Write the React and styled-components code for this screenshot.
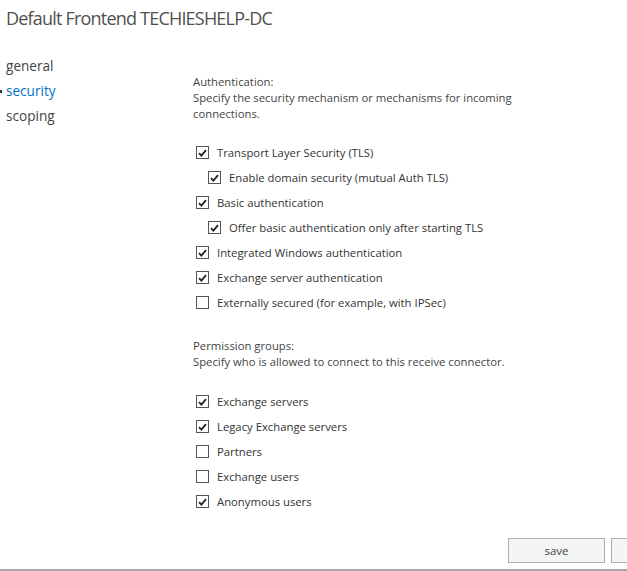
import React from 'react'
import styled, { createGlobalStyle } from 'styled-components'

const GlobalStyle = createGlobalStyle`
  html, body {
    margin: 0;
    padding: 0;
    background: #ffffff;
  }
  body {
    font-family: "Open Sans", "Noto Sans", "Liberation Sans", sans-serif;
    color: #333333;
  }
`

const Page = styled.div`
  width: 627px;
  height: 571px;
  display: flex;
  flex-direction: column;
  overflow: hidden;
  box-sizing: border-box;
`

const Title = styled.h1`
  margin: 0;
  padding: 6px 0 0 6px;
  height: 44px;
  box-sizing: border-box;
  font-size: 18px;
  letter-spacing: -0.8px;
  font-weight: 400;
  color: #505050;
  white-space: nowrap;
`

const Body = styled.div`
  flex: 1;
  display: grid;
  grid-template-columns: 193px 1fr;
`

const Nav = styled.nav`
  display: flex;
  flex-direction: column;
  padding-top: 9px;
`

const NavItem = styled.div`
  position: relative;
  height: 25px;
  line-height: 25px;
  padding-left: 6px;
  font-size: 13.6px;
  color: ${props => (props.active ? '#0072c6' : '#444444')};

  &::before {
    content: '';
    display: ${props => (props.active ? 'block' : 'none')};
    position: absolute;
    left: -2px;
    top: 12px;
    width: 4px;
    height: 3px;
    background: #333333;
  }
`

const Content = styled.div`
  padding-top: 30px;
  font-size: 11.3px;
  display: flex;
  flex-direction: column;
`

const Section = styled.section`
  margin-bottom: ${props => props.gap || 0}px;
`

const Heading = styled.div`
  line-height: 16px;
  color: #444444;
`

const Desc = styled.div`
  line-height: 16px;
  color: #444444;
  max-width: ${props => props.max || 400}px;
`

const List = styled.div`
  display: flex;
  flex-direction: column;
  margin-top: ${props => props.top}px;
`

const Row = styled.label`
  display: flex;
  align-items: center;
  height: 25px;
  padding-left: ${props => (props.indent ? 15 : 3)}px;
  color: #333333;
`

const Box = styled.span`
  width: 11px;
  height: 11px;
  border: 1px solid #555555;
  background: #ffffff;
  display: flex;
  align-items: center;
  justify-content: center;
  margin-right: 8px;
  flex-shrink: 0;
`

const Footer = styled.div`
  display: flex;
  justify-content: flex-end;
  gap: 6px;
  padding: 0 0 6px 0;
  margin-right: -81px;
  border-bottom: 2px solid #a6a6a6;
`

const Button = styled.button`
  width: 97px;
  height: 25px;
  border: 1px solid #a9b0b0;
  background: #f4f5f5;
  font-family: inherit;
  font-size: 11.5px;
  color: #444444;
  padding: 0;
`

function Checkbox({ label, checked, indent }) {
  return (
    <Row indent={indent}>
      <Box>
        {checked && (
          <svg width="9" height="8" viewBox="0 0 9 8">
            <path d="M1 4.2 L3.4 6.6 L8 1.2" fill="none" stroke="#222" strokeWidth="1.8" />
          </svg>
        )}
      </Box>
      {label}
    </Row>
  )
}

const auth = [
  { label: 'Transport Layer Security (TLS)', checked: true },
  { label: 'Enable domain security (mutual Auth TLS)', checked: true, indent: true },
  { label: 'Basic authentication', checked: true },
  { label: 'Offer basic authentication only after starting TLS', checked: true, indent: true },
  { label: 'Integrated Windows authentication', checked: true },
  { label: 'Exchange server authentication', checked: true },
  { label: 'Externally secured (for example, with IPSec)', checked: false },
]

const groups = [
  { label: 'Exchange servers', checked: true },
  { label: 'Legacy Exchange servers', checked: true },
  { label: 'Partners', checked: false },
  { label: 'Exchange users', checked: false },
  { label: 'Anonymous users', checked: true },
]

export default function App() {
  return (
    <Page>
      <GlobalStyle />
      <Title>Default Frontend TECHIESHELP-DC</Title>
      <Body>
        <Nav>
          <NavItem>general</NavItem>
          <NavItem active>security</NavItem>
          <NavItem>scoping</NavItem>
        </Nav>
        <Content>
          <Section gap={23}>
            <Heading>Authentication:</Heading>
            <Desc max={340}>Specify the security mechanism or mechanisms for incoming connections.</Desc>
            <List top={18}>
              {auth.map(item => (
                <Checkbox key={item.label} {...item} />
              ))}
            </List>
          </Section>
          <Section>
            <Heading>Permission groups:</Heading>
            <Desc>Specify who is allowed to connect to this receive connector.</Desc>
            <List top={19}>
              {groups.map(item => (
                <Checkbox key={item.label} {...item} />
              ))}
            </List>
          </Section>
        </Content>
      </Body>
      <Footer>
        <Button>save</Button>
        <Button aria-label="cancel" />
      </Footer>
    </Page>
  )
}
